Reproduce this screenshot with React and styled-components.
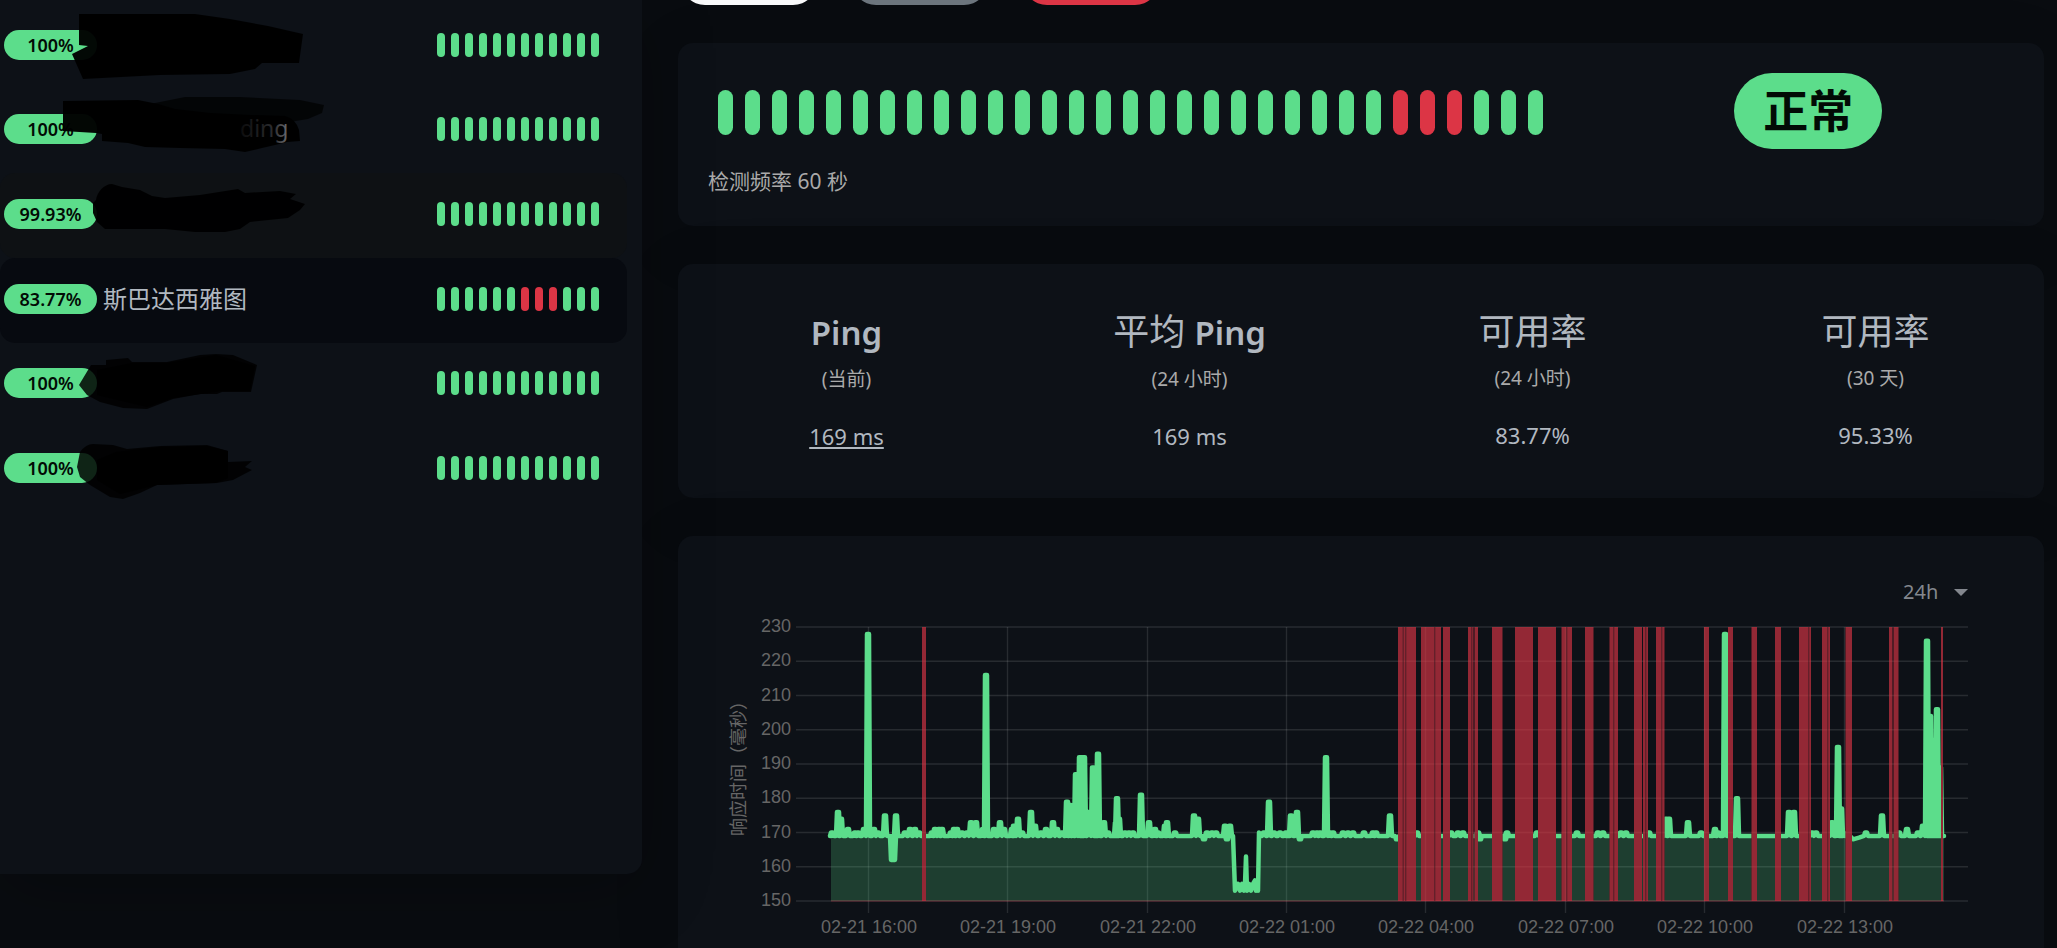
import React from 'react'
import styled, { createGlobalStyle } from 'styled-components'

const colors = {
    body: '#090c10',
    card: '#0d1117',
    hover: '#0e1114',
    active: '#070a10',
    text: '#b1b8c0',
    muted: '#aaaaaa',
    primary: '#5cdd8b',
    danger: '#dc3545',
    dark: '#020b05',
}

const monitors = [
    { id: 1, uptime: '100%', beats: '111111111111' },
    { id: 2, uptime: '100%', beats: '111111111111' },
    { id: 3, uptime: '99.93%', beats: '111111111111', hovered: true },
    { id: 4, uptime: '83.77%', name: '斯巴达西雅图', beats: '111111000111', active: true },
    { id: 5, uptime: '100%', beats: '111111111111' },
    { id: 6, uptime: '100%', beats: '111111111111' },
]

const bigBeats = '1111111111111111111111111000111'

const stats = [
    { id: 1, latin: 'Ping', sub: '(当前)', value: '169 ms', link: true },
    { id: 2, title: '平均 ', latin: 'Ping', sub: '(24 小时)', value: '169 ms' },
    { id: 3, title: '可用率', sub: '(24 小时)', value: '83.77%' },
    { id: 4, title: '可用率', sub: '(30 天)', value: '95.33%' },
]

// brush strokes that hide the private monitor names
const strokes = [
    { opacity: 0.96, d: 'M79 14H195L230 19L268 26L303 34L299 63H262L255 69L230 74L160 75L83 79L72 54L82 49L88 46L79 45Z' },
    { opacity: 0.7, d: 'M150 104L185 97H240L300 100L324 105L322 113L308 119L290 122L200 125Z' },
    { opacity: 0.97, d: 'M63 101L138 100L158 104L175 109L210 113L250 115L285 116Q296 119 299 130L300 141L287 142L275 145L262 148L245 152L225 149L180 148L145 147L128 143L102 141V134L96 133L63 131Z' },
    { opacity: 0.95, d: 'M96 200C97 192 104 184 112 184L122 187L140 190L152 196L165 198L200 195L238 189L245 193L280 191L296 194L290 199L305 204L300 210L288 218L250 222L240 229L225 232H195L165 229H105L97 222L93 213V203Z' },
    { opacity: 0.84, d: 'M79 385L91 365H106V360L128 358L132 362H167L200 355L216 354L233 355L257 365L251 392H222L217 394H200L173 399L147 409L123 408L100 402L87 395Z' },
    { opacity: 0.84, d: 'M77 467L80 452Q86 444 93 444L113 445L127 449L160 446L207 445L228 451V462L252 461L245 467L252 470L233 480L217 483L157 485L140 493L123 499L110 497L90 485L80 477Z' },
    { opacity: 0.9, d: 'M97 460L116 452L160 447L207 446L228 451V478L215 483L157 485L120 494L97 480Z' },
    { opacity: 0.9, d: 'M97 370L132 363H167L216 355L255 366L250 391H222L173 398L147 407L97 395Z' },
]

const App = () => {
    return (
        <>
            <GlobalStyle />
            <Page>
                <Sidebar>
                    <MonitorList>
                        {monitors.map((monitor) => {
                            const { id, uptime, name, beats, active, hovered } = monitor
                            return (
                                <Monitor key={id} $active={active} $hovered={hovered}>
                                    <Uptime>{uptime}</Uptime>
                                    <Name>{name}</Name>
                                    <Beats beats={beats} />
                                </Monitor>
                            )
                        })}
                    </MonitorList>
                    <Redaction />
                </Sidebar>
                <Main>
                    <Actions>
                        <Action type='button' aria-label='暂停' $color='#f8f9fa' />
                        <Action type='button' aria-label='编辑' $color='#6c757d' />
                        <Action type='button' aria-label='删除' $color={colors.danger} />
                    </Actions>
                    <StatusCard>
                        <div>
                            <Beats beats={bigBeats} big />
                            <Interval>检测频率 60 秒</Interval>
                        </div>
                        <Status>正常</Status>
                    </StatusCard>
                    <Card>
                        <StatsRow>
                            {stats.map((stat) => {
                                const { id, title, latin, sub, value, link } = stat
                                return (
                                    <Stat key={id}>
                                        <h4>
                                            {title}
                                            {latin && <Latin>{latin}</Latin>}
                                        </h4>
                                        <p>{sub}</p>
                                        {link ? <a href='#ping'>{value}</a> : <span>{value}</span>}
                                    </Stat>
                                )
                            })}
                        </StatsRow>
                    </Card>
                    <ChartCard id='ping'>
                        <Period>
                            <select aria-label='时间范围' defaultValue='24h'>
                                <option value='24h'>24h</option>
                            </select>
                            <svg width='14' height='7' viewBox='0 0 14 7' aria-hidden='true'>
                                <path d='M0 0H14L7 7Z' fill='#83878e' />
                            </svg>
                        </Period>
                        <PingChart />
                    </ChartCard>
                </Main>
            </Page>
        </>
    )
}

const Beats = ({ beats, big }) => {
    return (
        <BeatBar $big={big}>
            {beats.split('').map((beat, index) => (
                <Beat key={index} $big={big} $down={beat === '0'} />
            ))}
        </BeatBar>
    )
}

const Redaction = () => {
    return (
        <Overlay width='340' height='510' viewBox='0 0 340 510' aria-hidden='true'>
            <defs>
                <linearGradient id='fade'>
                    <stop offset='0' stopColor='#0c0c0d' />
                    <stop offset='0.7' stopColor='#2c2d30' />
                    <stop offset='1' stopColor='#6c6f74' />
                </linearGradient>
            </defs>
            {strokes.map((stroke) => (
                <path key={stroke.d} d={stroke.d} fillOpacity={stroke.opacity} />
            ))}
            <text x='240' y='137' fontSize='23' fill='url(#fade)'>ding</text>
        </Overlay>
    )
}

// chart geometry
const TOP = 15
const BOTTOM = 289
const BASE = 169
const toY = (value) => BOTTOM - ((value - 150) * (BOTTOM - TOP)) / 80

const yTicks = [230, 220, 210, 200, 190, 180, 170, 160, 150]
const xTicks = [
    [190, '02-21 16:00'],
    [329, '02-21 19:00'],
    [469, '02-21 22:00'],
    [608, '02-22 01:00'],
    [747, '02-22 04:00'],
    [887, '02-22 07:00'],
    [1026, '02-22 10:00'],
    [1166, '02-22 13:00'],
]

// [x, ping] of every sample that leaves the base line
const samples = [
    [154, 170], [160, 176], [163, 174], [170, 171], [177, 170], [180, 170], [186, 171],
    [190, 228], [196, 171], [200, 170], [207, 175], [214, 162], [216, 162], [218, 175], [227, 170],
    [232, 171], [237, 171], [241, 170], [254, 170], [257, 171], [261, 171], [264, 171],
    [273, 170], [276, 171], [279, 171], [284, 170], [289, 170], [293, 173], [298, 173],
    [305, 171], [308, 216], [316, 171], [322, 173], [326, 171], [334, 171], [336, 172], [340, 174],
    [344, 170], [353, 176], [357, 172], [363, 170], [368, 171], [375, 173], [379, 171],
    [384, 170], [389, 179], [392, 178], [395, 177], [398, 187], [402, 192], [404, 192], [406, 192],
    [411, 176], [415, 189], [418, 182], [420, 193], [426, 173], [430, 170], [438, 173], [439, 180],
    [441, 174], [447, 170], [451, 170], [455, 170], [463, 181], [471, 173], [477, 171], [480, 170],
    [487, 172], [489, 173], [497, 170], [516, 175], [520, 174], [526, 168], [529, 170],
    [534, 170], [538, 170], [547, 172], [549, 168], [552, 172],
]
const samplesAfterDrop = [
    [586, 170], [591, 179], [596, 170], [602, 170], [608, 170], [610, 170], [613, 175],
    [619, 176], [622, 168], [635, 170], [639, 170], [642, 170], [648, 192], [652, 170], [655, 170],
    [665, 170], [670, 170], [675, 170], [686, 170], [695, 170], [698, 170], [712, 175],
    [719, 168], [739, 170], [773, 170], [780, 170], [785, 170], [800, 170], [802, 168],
    [827, 168], [829, 170], [859, 170], [899, 170], [920, 170], [925, 170], [943, 170],
    [948, 170], [971, 170], [988, 174], [991, 174], [1010, 173], [1023, 170], [1037, 171],
    [1040, 170], [1047, 228], [1059, 180], [1111, 176], [1116, 176], [1134, 170], [1138, 170],
    [1154, 173], [1160, 195], [1163, 177], [1165, 170],
]
const samplesTail = [
    [1188, 170], [1204, 175], [1221, 170], [1229, 171], [1240, 170], [1245, 172],
    [1249, 226], [1251, 204], [1252, 204], [1254, 197], [1255, 197], [1257, 197], [1259, 206],
    [1261, 189], [1262, 189],
]

const spikes = (list) =>
    list.flatMap(([x, value]) => [[x - 2, BASE], [x - 1, value], [x + 1, value], [x + 2, BASE]])

const line = [
    [153, BASE],
    ...spikes(samples),
    [555, BASE], [557, 153], [560, 155], [562, 153], [564, 155], [566, 153], [567, 155], [568, 163],
    [569, 153], [571, 155], [573, 153], [575, 155], [577, 156], [578, 153], [580, 155], [580, 153],
    [581, 170], [582, BASE],
    ...spikes(samplesAfterDrop),
    [1168, BASE], [1172, 169], [1175, 168], [1181, 168.5], [1186, BASE],
    ...spikes(samplesTail),
    [1266, BASE],
]

const points = line.map(([x, value]) => `${x},${toY(value).toFixed(1)}`).join(' ')

// [start, end] of every outage
const outages = [
    [244, 248], [720, 738], [743, 763], [765, 772], [790, 795.5], [796.5, 800], [814, 824.5],
    [837, 855], [860, 878], [883.5, 894], [907, 915.5], [931.5, 940], [956, 964],
    [965, 970], [978, 986.5], [1026, 1031], [1050, 1055], [1073.5, 1079], [1097, 1103],
    [1121, 1133], [1144, 1152], [1167.5, 1174], [1211, 1214.5], [1215.5, 1220.5], [1263, 1265],
]
const seams = [724.5, 727, 756, 793, 888, 935, 967, 983, 1130, 1149]

const PingChart = () => {
    return (
        <Chart viewBox='0 0 1366 350' role='img' aria-label='响应时间'>
            <g stroke='#ffffff' strokeOpacity='0.11' strokeWidth='1.4'>
                {yTicks.map((tick) => (
                    <line key={tick} x1='118' x2='1290' y1={toY(tick)} y2={toY(tick)} />
                ))}
                {xTicks.map(([x]) => (
                    <line key={x} x1={x + 0.5} x2={x + 0.5} y1={TOP} y2={BOTTOM + 12} />
                ))}
            </g>
            <mask id='online' maskUnits='userSpaceOnUse' x='0' y='0' width='1366' height='350'>
                <rect width='1366' height='350' fill='#fff' />
                {outages.map(([start, end]) => (
                    <rect key={start} x={start} width={end - start} height='350' fill='#000' />
                ))}
            </mask>
            <g mask='url(#online)'>
                <polygon
                    points={`153,${BOTTOM} ${points} 1266,${BOTTOM}`}
                    fill={colors.primary}
                    fillOpacity='0.22'
                />
                <polyline
                    points={points}
                    fill='none'
                    stroke={colors.primary}
                    strokeWidth='4.5'
                    strokeLinejoin='round'
                    strokeLinecap='round'
                />
            </g>
            <line x1='153' x2='1266' y1={BOTTOM} y2={BOTTOM} stroke={colors.danger} strokeOpacity='0.4' />
            <g fill={colors.danger} fillOpacity='0.65'>
                {outages.map(([start, end]) => (
                    <rect key={start} x={start} y={TOP} width={end - start} height={BOTTOM - TOP} />
                ))}
            </g>
            <g fill={colors.card} fillOpacity='0.35'>
                {seams.map((x) => (
                    <rect key={x} x={x} y={TOP} width='1.4' height={BOTTOM - TOP} />
                ))}
            </g>
            <g fill='#666666' fontSize='18'>
                {yTicks.map((tick) => (
                    <text key={tick} x='113' y={toY(tick) + 5} textAnchor='end'>{tick}</text>
                ))}
                {xTicks.map(([x, label]) => (
                    <text key={x} x={x + 1} y='321' textAnchor='middle'>{label}</text>
                ))}
                <text transform='translate(67 152) rotate(-90)' textAnchor='middle'>
                    响应时间（毫秒）
                </text>
            </g>
        </Chart>
    )
}

const GlobalStyle = createGlobalStyle`
  * {
    box-sizing: border-box;
  }

  body {
    margin: 0;
    background: ${colors.body};
    color: ${colors.text};
    font-family: 'Noto Sans', 'Noto Sans CJK SC', sans-serif;
    font-size: 24px;
  }
`

const Page = styled.div`
  display: grid;
  grid-template-columns: 47fr 100fr;
  column-gap: 36px;
  align-items: start;
  height: 100vh;
  padding-right: 13px;
  overflow: hidden;
`

const Sidebar = styled.aside`
  position: relative;
  min-height: 874px;
  padding: 4px 15px 0 0;
  background: ${colors.card};
  border-radius: 0 0 15px 0;
  box-shadow: 0 15px 70px rgba(0, 0, 0, 0.25);
`

const MonitorList = styled.div`
  display: grid;
  grid-template-rows: repeat(6, 1fr);
  height: 508px;
`

const Monitor = styled.div`
  display: flex;
  align-items: center;
  padding: 0 28px 3px 4px;
  border-radius: 15px;
  background: ${({ $active, $hovered }) =>
        $active ? colors.active : $hovered ? colors.hover : 'transparent'};
`

const Uptime = styled.span`
  width: 93px;
  border-radius: 15px;
  background: ${colors.primary};
  color: ${colors.dark};
  font-size: 18px;
  font-weight: 600;
  line-height: 30px;
  text-align: center;
`

const Name = styled.span`
  flex: 1;
  padding-left: 6px;
  line-height: 36px;
`

const Overlay = styled.svg`
  position: absolute;
  top: 0;
  left: 0;
  pointer-events: none;
`

const BeatBar = styled.div`
  display: flex;
  gap: ${({ $big }) => ($big ? '12px' : '6px')};
  padding-left: ${({ $big }) => ($big ? '10px' : '0')};
`

const Beat = styled.div`
  width: ${({ $big }) => ($big ? '15px' : '8px')};
  height: ${({ $big }) => ($big ? '45px' : '24px')};
  border-radius: 8px;
  background: ${({ $down }) => ($down ? colors.danger : colors.primary)};
`

const Main = styled.main`
  min-width: 0;
`

const Actions = styled.div`
  display: flex;
  align-items: flex-end;
  gap: 35px;
  height: 5px;
  margin-bottom: 38px;
  padding-left: 3px;
  overflow: hidden;
`

const Action = styled.button`
  flex: none;
  width: 136px;
  height: 48px;
  border: none;
  border-radius: 24px;
  background: ${({ $color }) => $color};
  cursor: pointer;
`

const Card = styled.section`
  margin-bottom: 38px;
  background: ${colors.card};
  border-radius: 15px;
  box-shadow: 0 15px 70px rgba(0, 0, 0, 0.1);
`

const StatusCard = styled(Card)`
  display: grid;
  grid-template-columns: 2fr 1fr;
  align-items: start;
  height: 183px;
  padding: 30px 12px;

  > div {
    padding: 17px 0 0 18px;
  }
`

const Interval = styled.p`
  margin: 30px 0 0;
  color: ${colors.muted};
  font-size: 21px;
  line-height: 32px;
`

const Status = styled.span`
  justify-self: center;
  padding: 0 29px;
  border-radius: 38px;
  background: ${colors.primary};
  color: ${colors.dark};
  font-size: 45px;
  font-weight: 700;
  line-height: 76px;
`

const StatsRow = styled.div`
  display: grid;
  grid-template-columns: repeat(4, 1fr);
  height: 234px;
  margin: 0 -3px;
  padding-top: 46px;
`

const Stat = styled.div`
  text-align: center;

  h4 {
    margin: 0;
    font-size: 36px;
    font-weight: 400;
    line-height: 44px;
  }

  p {
    margin: 9px 0 24px;
    color: ${colors.muted};
    font-size: 19px;
    line-height: 30px;
  }

  a, span {
    font-size: 22px;
    line-height: 36px;
  }

  a {
    color: ${colors.text};
    text-underline-offset: 2px;
  }
`

const Latin = styled.b`
  font-size: 33px;
  font-weight: 600;
`

const ChartCard = styled(Card)`
  padding-top: 36px;
`

const Period = styled.div`
  display: flex;
  align-items: center;
  justify-content: flex-end;
  gap: 15px;
  height: 40px;
  padding-right: 76px;

  select {
    appearance: none;
    padding: 0;
    border: none;
    background: transparent;
    color: #83878e;
    font-family: inherit;
    font-size: 20px;
    line-height: 36px;
  }
`

const Chart = styled.svg`
  display: block;
  width: 100%;
  font-family: 'Liberation Sans', 'Noto Sans CJK SC', sans-serif;
`

export default App
